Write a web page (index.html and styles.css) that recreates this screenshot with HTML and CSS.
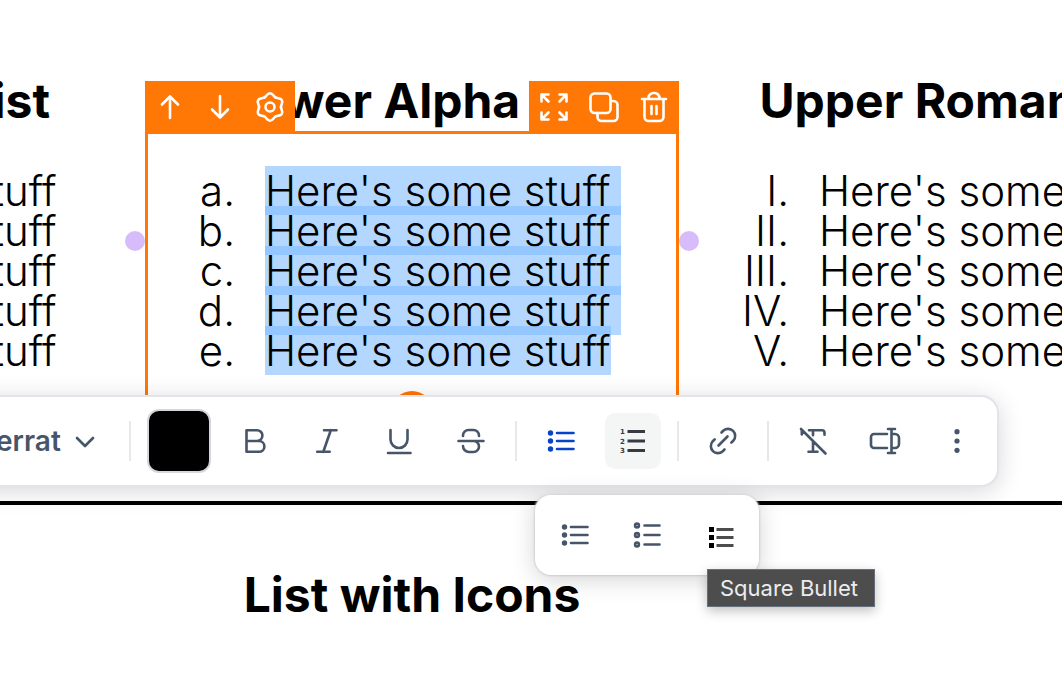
FILE: index.html
```html
<!DOCTYPE html>
<html lang="en">
<head>
  <meta charset="UTF-8">
  <title>Lists</title>
  <link rel="stylesheet" href="styles.css">
</head>
<body>

<main class="page">
  <section class="columns">
    <div class="column column-first">
      <h2>List</h2>
      <ol class="list">
        <li><span>Here's some stuff</span></li>
        <li><span>Here's some stuff</span></li>
        <li><span>Here's some stuff</span></li>
        <li><span>Here's some stuff</span></li>
        <li><span>Here's some stuff</span></li>
      </ol>
    </div>

    <div class="column column-active">
      <h2>Lower Alpha List</h2>
      <ol class="list list-alpha selected">
        <li><span>Here's some stuff</span></li>
        <li><span>Here's some stuff</span></li>
        <li><span>Here's some stuff</span></li>
        <li><span>Here's some stuff</span></li>
        <li><span>Here's some stuff</span></li>
      </ol>

      <div class="frame">
        <div class="frame-bar frame-bar-left">
          <button aria-label="Move up"><svg class="icon" viewBox="0 0 32 32"><path d="M16 27V5.5M8 13.5l8-8 8 8"/></svg></button>
          <button aria-label="Move down"><svg class="icon" viewBox="0 0 32 32"><path d="M16 5v21.5M8 18.5l8 8 8-8"/></svg></button>
          <button aria-label="Settings">
            <svg class="icon" viewBox="0 0 32 32">
              <path id="lobe" d="M10.5 6.5C12.7 5.2 13 2.3 16 2.3S19.3 5.2 21.5 6.5"/>
              <use href="#lobe" transform="rotate(60 16 16)"/>
              <use href="#lobe" transform="rotate(120 16 16)"/>
              <use href="#lobe" transform="rotate(180 16 16)"/>
              <use href="#lobe" transform="rotate(240 16 16)"/>
              <use href="#lobe" transform="rotate(300 16 16)"/>
              <circle cx="16" cy="16" r="4.5"/>
            </svg>
          </button>
        </div>
        <div class="frame-bar frame-bar-right">
          <button aria-label="Expand"><svg class="icon" viewBox="0 0 32 32"><path d="M3.5 10.5v-7h7M3.5 3.5l7 7M21.5 3.5h7v7M28.5 3.5l-7 7M3.5 21.5v7h7M3.5 28.5l7-7M28.5 21.5v7h-7M28.5 28.5l-7-7"/></svg></button>
          <button aria-label="Duplicate"><svg class="icon" viewBox="0 0 32 32"><rect x="2.5" y="2.5" width="20" height="19.5" rx="4"/><path d="M22.5 10h3a4 4 0 0 1 4 4v12a4 4 0 0 1-4 4h-12a4 4 0 0 1-4-4v-4"/></svg></button>
          <button aria-label="Delete"><svg class="icon" viewBox="0 0 32 32"><path d="M4 8h24M6.5 8v18a4 4 0 0 0 4 4h11a4 4 0 0 0 4-4V8M10.5 8V7a5 5 0 0 1 5-5h1a5 5 0 0 1 5 5v1M13.5 15v8M18.5 15v8"/></svg></button>
        </div>
        <i class="handle handle-left"></i>
        <i class="handle handle-right"></i>
        <i class="handle-add"></i>
      </div>
    </div>

    <div class="column">
      <h2>Upper Roman List</h2>
      <ol class="list list-roman">
        <li><span>Here's some stuff</span></li>
        <li><span>Here's some stuff</span></li>
        <li><span>Here's some stuff</span></li>
        <li><span>Here's some stuff</span></li>
        <li><span>Here's some stuff</span></li>
      </ol>
    </div>
  </section>

  <section class="columns icons-row">
    <h2>List with Icons</h2>
  </section>
</main>

<div class="toolbar" role="toolbar">
  <label class="font-picker">
    <select aria-label="Font"><option>Montserrat</option></select>
    <svg class="chevron" viewBox="0 0 20 20"><path d="M2 7l8 8 8-8"/></svg>
  </label>
  <i class="divider"></i>
  <button class="swatch" aria-label="Text color"></button>
  <button aria-label="Bold"><svg class="icon" viewBox="0 0 32 32"><path d="M7.5 16V5.2H18a5.4 5.4 0 0 1 0 10.8H7.5v10.8H20a5.4 5.4 0 0 0 0-10.8h-2"/></svg></button>
  <button aria-label="Italic"><svg class="icon" viewBox="0 0 32 32"><path d="M13 5.2h12.5M6.2 26.8h12.5M19.8 5.2l-7.5 21.6"/></svg></button>
  <button aria-label="Underline"><svg class="icon" viewBox="0 0 32 32"><path d="M7.5 5v9.5a8.5 8.5 0 0 0 17 0V5M5 28h22.5"/></svg></button>
  <button aria-label="Strikethrough"><svg class="icon" viewBox="0 0 32 32"><path d="M8 11v-.5a5.5 5.5 0 0 1 5.5-5.5h5a5.5 5.5 0 0 1 5.5 5.5v.5M3.5 16h25M8 21a6 6 0 0 0 6 6h4.5a5.5 5.5 0 0 0 0-11"/></svg></button>
  <i class="divider"></i>
  <button class="active" aria-label="Bulleted list">
    <svg class="icon" viewBox="0 0 32 32"><g class="dots"><circle cx="5.5" cy="8" r="2.7"/><circle cx="5.5" cy="16" r="2.7"/><circle cx="5.5" cy="24" r="2.7"/></g><path d="M12 8h16.5M12 16h16.5M12 24h16.5"/></svg>
  </button>
  <button class="hovered" aria-label="Numbered list">
    <svg class="icon" viewBox="0 0 32 32"><g class="digits"><text x="3" y="9">1</text><text x="3" y="19">2</text><text x="3" y="28">3</text></g><path class="bars" d="M10.5 6.5H28M10.5 16H28M10.5 25.5H28"/></svg>
  </button>
  <i class="divider"></i>
  <button aria-label="Link"><svg class="icon" viewBox="0 0 32 32"><path d="M14.5 7.5l2-2a7.1 7.1 0 0 1 10 10l-2.2 2.2M17.5 24.5l-2 2a7.1 7.1 0 0 1-10-10l2.2-2.2M11.5 20.5l9-9"/></svg></button>
  <i class="divider"></i>
  <button aria-label="Clear formatting"><svg class="icon" viewBox="0 0 32 32"><path d="M4 4l24.5 24.5M12 5.2h13a2.5 2.5 0 0 1 2.5 2.5v2M4.8 5v4.5M16 5.2v5M16 16.5v10.3M11.5 26.8h9"/></svg></button>
  <button aria-label="Merge fields"><svg class="icon" viewBox="0 0 32 32"><path d="M18 9H5a3 3 0 0 0-3 3v8a3 3 0 0 0 3 3h13M23 9h3a4 4 0 0 1 4 4v6a4 4 0 0 1-4 4h-3M22.5 4v24M19 4h7M19 28h7"/></svg></button>
  <button aria-label="More"><svg class="icon" viewBox="0 0 32 32"><g class="dots"><circle cx="16" cy="6.7" r="2.6"/><circle cx="16" cy="16" r="2.6"/><circle cx="16" cy="25.3" r="2.6"/></g></svg></button>
</div>

<div class="menu">
  <button aria-label="Disc bullet">
    <svg class="icon" viewBox="0 0 32 32"><g class="dots"><circle cx="5.5" cy="8" r="2.7"/><circle cx="5.5" cy="16" r="2.7"/><circle cx="5.5" cy="24" r="2.7"/></g><path d="M12 8h16.5M12 16h16.5M12 24h16.5"/></svg>
  </button>
  <button aria-label="Circle bullet">
    <svg class="icon" viewBox="0 0 32 32"><circle cx="6" cy="6.5" r="1.9"/><circle cx="6" cy="16" r="1.9"/><circle cx="6" cy="25.5" r="1.9"/><path d="M13.5 6.5h15M13.5 16h15M13.5 25.5h15"/></svg>
  </button>
  <button aria-label="Square bullet">
    <svg class="icon" viewBox="0 0 32 32"><path class="squares" d="M6 8h5v5h-5zM6 16h5v5h-5zM6 24h5v5h-5z"/><path class="bars" d="M13.5 10.5h17M13.5 18.5h17M13.5 26.5h17"/></svg>
  </button>
  <span class="tooltip" role="tooltip">Square Bullet</span>
</div>

</body>
</html>
```
FILE: styles.css
```css
* {
  box-sizing: border-box;
}

body {
  margin: 0;
  position: relative;
  min-height: 100vh;
  overflow: hidden;
  font-family: Inter, "Liberation Sans", sans-serif;
  color: #000;
  background: #fff;
}

button {
  display: flex;
  align-items: center;
  justify-content: center;
  flex: none;
  padding: 0;
  border: 0;
  background: none;
  color: inherit;
}

.icon {
  width: 32px;
  height: 32px;
  fill: none;
  stroke: currentColor;
  stroke-width: 2.6;
  stroke-linecap: round;
  stroke-linejoin: round;
}

.dots {
  fill: currentColor;
  stroke: none;
}

/* the canvas is wider than the window on both sides */
.columns {
  display: grid;
  grid-template-columns: 1fr 1fr 1fr;
  gap: 20px;
  margin: 0 -171px 0 -409px;
}

.column {
  position: relative;
  padding-top: 71px;
}

h2 {
  margin: 0;
  font-size: 48px;
  line-height: 60px;
  font-weight: 700;
  text-align: center;
  white-space: nowrap;
}

.column-first h2 {
  padding-right: 75px;
  text-align: right;
}

.column-active h2 {
  padding-left: 20px;
}

.list {
  margin: 35px 0 0;
  padding: 0 0 9px;
  list-style: none;
  counter-reset: item;
  font-size: 42px;
  font-weight: 300;
  white-space: nowrap;
}

.list li {
  display: flex;
  height: 40px;
  counter-increment: item;
}

.list li::before {
  content: counter(item) ".";
  width: 90px;
  margin-right: 30px;
  line-height: 49px;
  text-align: right;
}

.list-alpha li::before {
  content: counter(item, lower-alpha) ".";
}

.list-roman li::before {
  content: counter(item, upper-roman) ".";
}

.list span {
  height: 49px;
  line-height: 49px;
}

/* line boxes overlap, so the translucent fill doubles up between lines */
.selected span {
  padding-right: 10px;
  background: rgba(126, 187, 255, 0.59);
}

.selected li:last-child span {
  padding-right: 0;
}

.frame {
  position: absolute;
  top: 131px;
  right: 0;
  bottom: 0;
  left: 0;
  min-height: 281px;
  border: 3px solid #ff7705;
}

.frame-bar {
  position: absolute;
  bottom: 100%;
  display: flex;
  background: #ff7705;
  color: #fff;
}

.frame-bar-left {
  left: -3px;
}

.frame-bar-right {
  right: -3px;
}

.frame-bar button {
  width: 50px;
  height: 53px;
  padding-bottom: 2px;
}

.handle {
  position: absolute;
  top: 97px;
  width: 20px;
  height: 20px;
  border-radius: 50%;
  background: #d6bcfa;
}

.handle-left {
  right: 100%;
  margin-right: 3px;
}

.handle-right {
  left: 100%;
  margin-left: 3px;
}

.handle-add {
  position: absolute;
  bottom: -22px;
  left: 50%;
  width: 40px;
  height: 40px;
  margin-left: -20px;
  border-radius: 50%;
  background: #ff7705;
}

.icons-row {
  display: block;
  margin-top: 126px;
  padding-top: 60px;
  border-top: 4px solid #000;
}

.toolbar {
  position: absolute;
  top: 395px;
  right: 63px;
  left: -400px;
  display: flex;
  align-items: center;
  justify-content: flex-end;
  gap: 16px;
  padding: 12px;
  border: 2px solid #e2e4e9;
  border-radius: 18px;
  background: #fff;
  color: #475569;
  box-shadow: 0 4px 24px rgba(0, 0, 0, 0.16);
}

.toolbar button,
.menu button {
  width: 56px;
  height: 56px;
  border-radius: 10px;
}

.toolbar .swatch {
  width: 64px;
  height: 64px;
  border: 2px solid #d5d7dc;
  border-radius: 12px;
  background: #000;
}

.toolbar .active {
  color: #0842c8;
}

.toolbar .hovered {
  background: #f4f6f6;
  color: #363a42;
}

.divider {
  flex: none;
  width: 2px;
  height: 40px;
  background: #e8e8ea;
}

.font-picker {
  display: flex;
  align-items: center;
  gap: 14px;
  padding-right: 18px;
}

.font-picker select {
  appearance: none;
  padding: 0;
  border: 0;
  background: none;
  color: inherit;
  font-family: inherit;
  font-size: 28px;
  font-weight: 600;
}

.chevron {
  width: 20px;
  height: 20px;
  fill: none;
  stroke: currentColor;
  stroke-width: 2.6;
  stroke-linecap: round;
  stroke-linejoin: round;
}

.digits {
  fill: currentColor;
  stroke: none;
  font-family: "DejaVu Sans", sans-serif;
  font-size: 7px;
  font-weight: 700;
}

.bars {
  stroke-width: 3;
  stroke-linecap: butt;
}

.menu {
  position: absolute;
  top: 495px;
  right: 303px;
  display: flex;
  gap: 16px;
  padding: 12px;
  border-radius: 16px;
  background: #fff;
  color: #475569;
  box-shadow: 0 4px 24px rgba(0, 0, 0, 0.18), 0 0 2px 1px #e2e4e9;
}

.menu .bars {
  stroke: #4d4d4d;
}

.squares {
  fill: #000;
  stroke: none;
}

.tooltip {
  position: absolute;
  top: 74px;
  left: 172px;
  padding: 0 16px 0 12px;
  border: 1px solid #66707c;
  background: #4d4d4d;
  color: #ececec;
  font-size: 22px;
  line-height: 36px;
  white-space: nowrap;
  box-shadow: 0 4px 12px rgba(0, 0, 0, 0.25);
}
```
